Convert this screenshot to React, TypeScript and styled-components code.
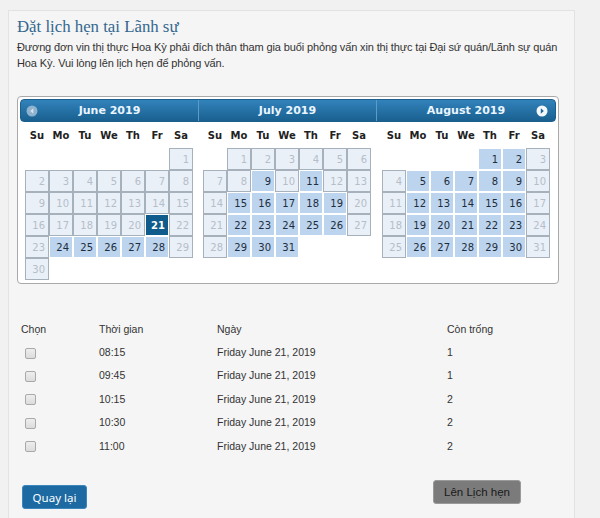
import React from "react";
import styled, { createGlobalStyle, css } from "styled-components";

const GlobalStyle = createGlobalStyle`
  html, body {
    margin: 0;
    padding: 0;
    background: #f1f1f1;
  }
  * {
    box-sizing: border-box;
  }
`;

const Panel = styled.div`
  margin: 10px 0 0 8px;
  width: 567px;
  height: 520px;
  border: 1px solid #e2e2e2;
  background: #f5f5f5;
  padding: 5px 8px 0 8px;
`;

const Title = styled.h1`
  margin: 0;
  font-family: "Liberation Serif", "DejaVu Serif", serif;
  font-weight: 400;
  font-size: 16.8px;
  line-height: 22px;
  color: #34688f;
`;

const Intro = styled.p`
  margin: 1px 0 0 0;
  font-family: "Liberation Sans", Arial, sans-serif;
  font-size: 11px;
  letter-spacing: -0.13px;
  line-height: 16px;
  color: #333;
`;

const Calendar = styled.div`
  margin-top: 25px;
  width: 542px;
  border: 1px solid #a9a9a9;
  border-radius: 4px;
  background: #fff;
  padding: 2px;
  font-family: "DejaVu Sans", Verdana, sans-serif;
`;

const HeaderBar = styled.div`
  display: flex;
  height: 23px;
  border-radius: 4px;
  background: linear-gradient(#3282bb, #19608f);
  border: 1px solid #1d5f8c;
`;

const MonthTitle = styled.div<{ $w: number; $first?: boolean }>`
  position: relative;
  width: ${(p) => p.$w}px;
  display: flex;
  align-items: center;
  justify-content: center;
  font-weight: 700;
  font-size: 11px;
  color: #eaf5ff;
  ${(p) =>
    !p.$first &&
    css`
      border-left: 1px solid #5d9bc7;
    `}
`;

const NavIcon = styled.svg<{ $side: "left" | "right" }>`
  position: absolute;
  top: 5px;
  ${(p) => (p.$side === "left" ? "left: 5px;" : "right: 7px;")}
`;

const MonthsRow = styled.div`
  display: flex;
`;

const MonthBody = styled.div<{ $w: number }>`
  width: ${(p) => p.$w}px;
  display: flex;
  flex-direction: column;
  align-items: center;
  padding-bottom: 1px;
`;

const DayNames = styled.div`
  display: grid;
  grid-template-columns: repeat(7, 24px);
  height: 26px;
  align-items: center;
`;

const DayName = styled.span`
  text-align: center;
  font-weight: 700;
  font-size: 10px;
  color: #222;
`;

const Grid = styled.div`
  display: grid;
  grid-template-columns: repeat(7, 24px);
  grid-auto-rows: 22px;
`;

type CellKind = "empty" | "off" | "open" | "picked";

const Cell = styled.div<{ $kind: CellKind }>`
  display: flex;
  align-items: center;
  justify-content: flex-end;
  padding-right: 3px;
  font-size: 10px;
  ${(p) =>
    p.$kind === "off" &&
    css`
      border: 1px solid #a7b1bb;
      background: #e9f0f8;
      color: #b6bec8;
    `}
  ${(p) =>
    p.$kind === "open" &&
    css`
      border: 1px solid #fff;
      background: #bcd4ee;
      color: #1f2c3b;
    `}
  ${(p) =>
    p.$kind === "picked" &&
    css`
      border: 1px solid #fff;
      background: #0f5b8b;
      color: #fff;
      font-weight: 700;
    `}
`;

const Slots = styled.div`
  margin-top: 33px;
  padding-left: 4px;
  display: grid;
  grid-template-columns: 78px 118px 230px auto;
  grid-auto-rows: 23.4px;
  align-items: center;
  font-family: "Liberation Sans", Arial, sans-serif;
  font-size: 10.5px;
  color: #333;
`;

const Check = styled.span`
  display: block;
  width: 11px;
  height: 11px;
  margin: 2px 0 0 4px;
  border: 1px solid #a9a9a9;
  border-radius: 2px;
  background: linear-gradient(#eeeeee, #dcdcdc);
`;

const Actions = styled.div`
  margin-top: 23px;
  display: flex;
  align-items: flex-start;
  padding-left: 5px;
`;

const Button = styled.button<{ $primary?: boolean }>`
  height: 24px;
  border-radius: 3px;
  font-size: 11.5px;
  cursor: pointer;
  ${(p) =>
    p.$primary
      ? css`
          margin-top: 5px;
          width: 65px;
          border: 1px solid #3a86bd;
          background: #1d6aa2;
          color: #fff;
          font-family: "Noto Sans", "Open Sans", sans-serif;
        `
      : css`
          margin-left: auto;
          margin-right: 45px;
          width: 88px;
          border: 1px solid #9a9a9a;
          background: #7b7b7b;
          color: #1a1a1a;
          font-family: "Liberation Sans", Arial, sans-serif;
        `}
`;

type Month = {
  name: string;
  width: number;
  startDay: number;
  days: number;
  open: number[];
  picked?: number;
};

const range = (a: number, b: number) =>
  Array.from({ length: b - a + 1 }, (_, i) => a + i);

const months: Month[] = [
  { name: "June 2019", width: 178, startDay: 6, days: 30, open: range(24, 28), picked: 21 },
  {
    name: "July 2019",
    width: 178,
    startDay: 1,
    days: 31,
    open: [9, 11, ...range(15, 19), ...range(22, 26), 29, 30, 31],
  },
  {
    name: "August 2019",
    width: 180,
    startDay: 4,
    days: 31,
    open: [1, 2, ...range(5, 9), ...range(12, 16), ...range(19, 23), ...range(26, 30)],
  },
];

const dayNames = ["Su", "Mo", "Tu", "We", "Th", "Fr", "Sa"];

const slots = [
  { time: "08:15", free: 1 },
  { time: "09:45", free: 1 },
  { time: "10:15", free: 2 },
  { time: "10:30", free: 2 },
  { time: "11:00", free: 2 },
];

function MonthGrid({ m }: { m: Month }) {
  const cells = [];
  for (let i = 0; i < m.startDay; i++) {
    cells.push(<Cell key={"e" + i} $kind="empty" />);
  }
  for (let d = 1; d <= m.days; d++) {
    const kind: CellKind =
      d === m.picked ? "picked" : m.open.includes(d) ? "open" : "off";
    cells.push(
      <Cell key={d} $kind={kind}>
        {d}
      </Cell>
    );
  }
  return (
    <MonthBody $w={m.width}>
      <DayNames>
        {dayNames.map((n) => (
          <DayName key={n}>{n}</DayName>
        ))}
      </DayNames>
      <Grid>{cells}</Grid>
    </MonthBody>
  );
}

export default function App() {
  return (
    <>
      <GlobalStyle />
      <Panel>
        <Title>Đặt lịch hẹn tại Lãnh sự</Title>
        <Intro>
          Đương đơn vin thị thực Hoa Kỳ phải đích thân tham gia buổi phỏng vấn xin thị thực tại Đại sứ quán/Lãnh sự quán Hoa Kỳ. Vui lòng lên lịch hẹn để phỏng vấn.
        </Intro>
        <Calendar>
          <HeaderBar>
            {months.map((m, i) => (
              <MonthTitle key={m.name} $w={i === 1 ? m.width : m.width - 1} $first={i === 0}>
                {i === 0 && (
                  <NavIcon $side="left" width="12" height="12" viewBox="0 0 12 12">
                    <circle cx="6" cy="6" r="5.5" fill="#8fb3cf" />
                    <path d="M7.3 3.3 L4.3 6 L7.3 8.7 Z" fill="#d6e6f2" />
                  </NavIcon>
                )}
                {m.name}
                {i === 2 && (
                  <NavIcon $side="right" width="12" height="12" viewBox="0 0 12 12">
                    <circle cx="6" cy="6" r="5.5" fill="#f4f8fb" />
                    <path d="M4.8 3.3 L7.8 6 L4.8 8.7 Z" fill="#1d6396" />
                  </NavIcon>
                )}
              </MonthTitle>
            ))}
          </HeaderBar>
          <MonthsRow>
            {months.map((m) => (
              <MonthGrid key={m.name} m={m} />
            ))}
          </MonthsRow>
        </Calendar>
        <Slots>
          <span>Chọn</span>
          <span>Thời gian</span>
          <span>Ngày</span>
          <span>Còn trống</span>
          {slots.map((s) => (
            <React.Fragment key={s.time}>
              <Check />
              <span>{s.time}</span>
              <span>Friday June 21, 2019</span>
              <span>{s.free}</span>
            </React.Fragment>
          ))}
        </Slots>
        <Actions>
          <Button $primary>Quay lại</Button>
          <Button>Lên Lịch hẹn</Button>
        </Actions>
      </Panel>
    </>
  );
}
